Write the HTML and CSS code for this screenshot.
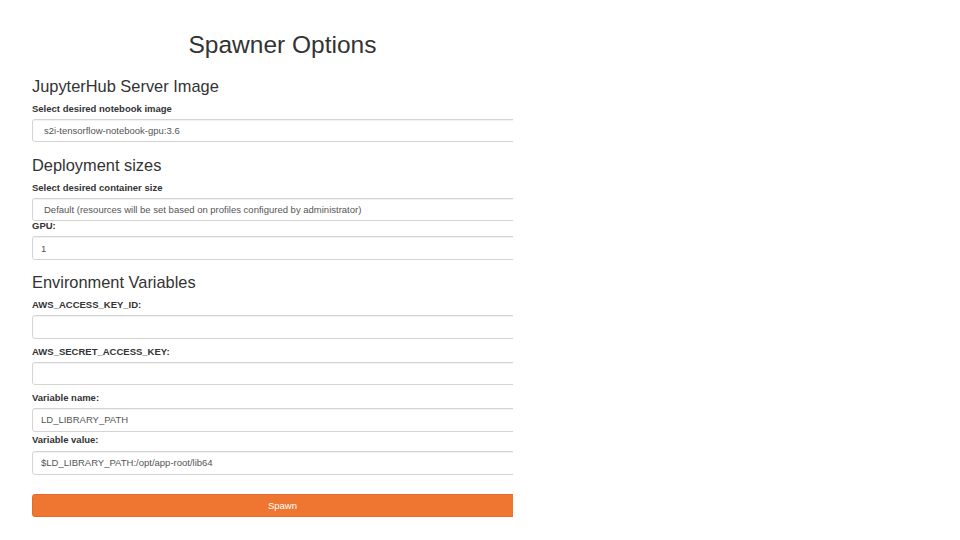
FILE: index.html
```html
<!DOCTYPE html>
<html>
<head>
<meta charset="utf-8">
<link rel="stylesheet" href="styles.css">
</head>
<body>
<div class="viewport">
  <div class="content">
    <h1 class="title">Spawner Options</h1>
    <h3 class="section first">JupyterHub Server Image</h3>
    <div class="group">
      <label class="lbl">Select desired notebook image</label>
      <select class="ctl sel"><option>s2i-tensorflow-notebook-gpu:3.6</option></select>
    </div>
    <h3 class="section">Deployment sizes</h3>
    <div class="group tight">
      <label class="lbl">Select desired container size</label>
      <select class="ctl sel"><option>Default (resources will be set based on profiles configured by administrator)</option></select>
    </div>
    <div class="group pull">
      <label class="lbl lbl-near">GPU:</label>
      <input class="ctl" type="text" value="1">
    </div>
    <h3 class="section">Environment Variables</h3>
    <div class="group">
      <label class="lbl">AWS_ACCESS_KEY_ID:</label>
      <input class="ctl" type="text" value="">
    </div>
    <div class="group">
      <label class="lbl">AWS_SECRET_ACCESS_KEY:</label>
      <input class="ctl" type="text" value="">
    </div>
    <div class="group tight-small">
      <label class="lbl">Variable name:</label>
      <input class="ctl" type="text" value="LD_LIBRARY_PATH">
    </div>
    <div class="group">
      <label class="lbl lbl-near">Variable value:</label>
      <input class="ctl" type="text" value="$LD_LIBRARY_PATH:/opt/app-root/lib64">
    </div>
    <button class="spawn" type="submit">Spawn</button>
  </div>
</div>
</body>
</html>
```

FILE: styles.css
```css
html, body {
  margin: 0;
  padding: 0;
  background: #ffffff;
}
body {
  font-family: "Liberation Sans", Arial, sans-serif;
  color: #333333;
  font-size: 9.5px;
  line-height: 13.6px;
}
.viewport {
  margin-left: 32px;
  width: 481px;
  overflow: hidden;
  padding-top: 30.6px;
}
.content {
  width: 501px;
  display: flow-root;
}
.title {
  margin: 0;
  font-size: 24.5px;
  line-height: 27px;
  font-weight: 500;
  text-align: center;
}
.section {
  margin: 13.5px 0 7px;
  font-size: 16.4px;
  line-height: 18px;
  font-weight: 500;
}
.section.first {
  margin-top: 19.2px;
}
.group {
  margin-bottom: 6px;
}
.group.tight {
  margin-bottom: 0;
}
.group.tight-small {
  margin-bottom: 1.5px;
}
.group.pull {
  margin-top: -2.5px;
}
.lbl {
  display: block;
  font-weight: bold;
  margin-bottom: 3.3px;
}
.lbl-near {
  margin-bottom: 4.3px;
}
.ctl {
  display: block;
  box-sizing: border-box;
  width: 100%;
  height: 23.5px;
  margin: 0;
  padding: 0 8px;
  border: 1px solid #d4d4d4;
  border-radius: 2.7px;
  background: #ffffff;
  box-shadow: inset 0 1px 1px rgba(0, 0, 0, 0.06);
  font-family: "Liberation Sans", Arial, sans-serif;
  font-size: 9.5px;
  color: #555555;
  outline: none;
}
.sel {
  -webkit-appearance: none;
  appearance: none;
  padding-left: 11px;
}
.spawn {
  display: block;
  width: 100%;
  height: 23.5px;
  margin-top: 19px;
  padding: 0;
  border: 1px solid #e86a22;
  border-radius: 2.7px;
  background: #ef7630;
  color: #ffffff;
  font-family: "Liberation Sans", Arial, sans-serif;
  font-size: 9.5px;
}
```
